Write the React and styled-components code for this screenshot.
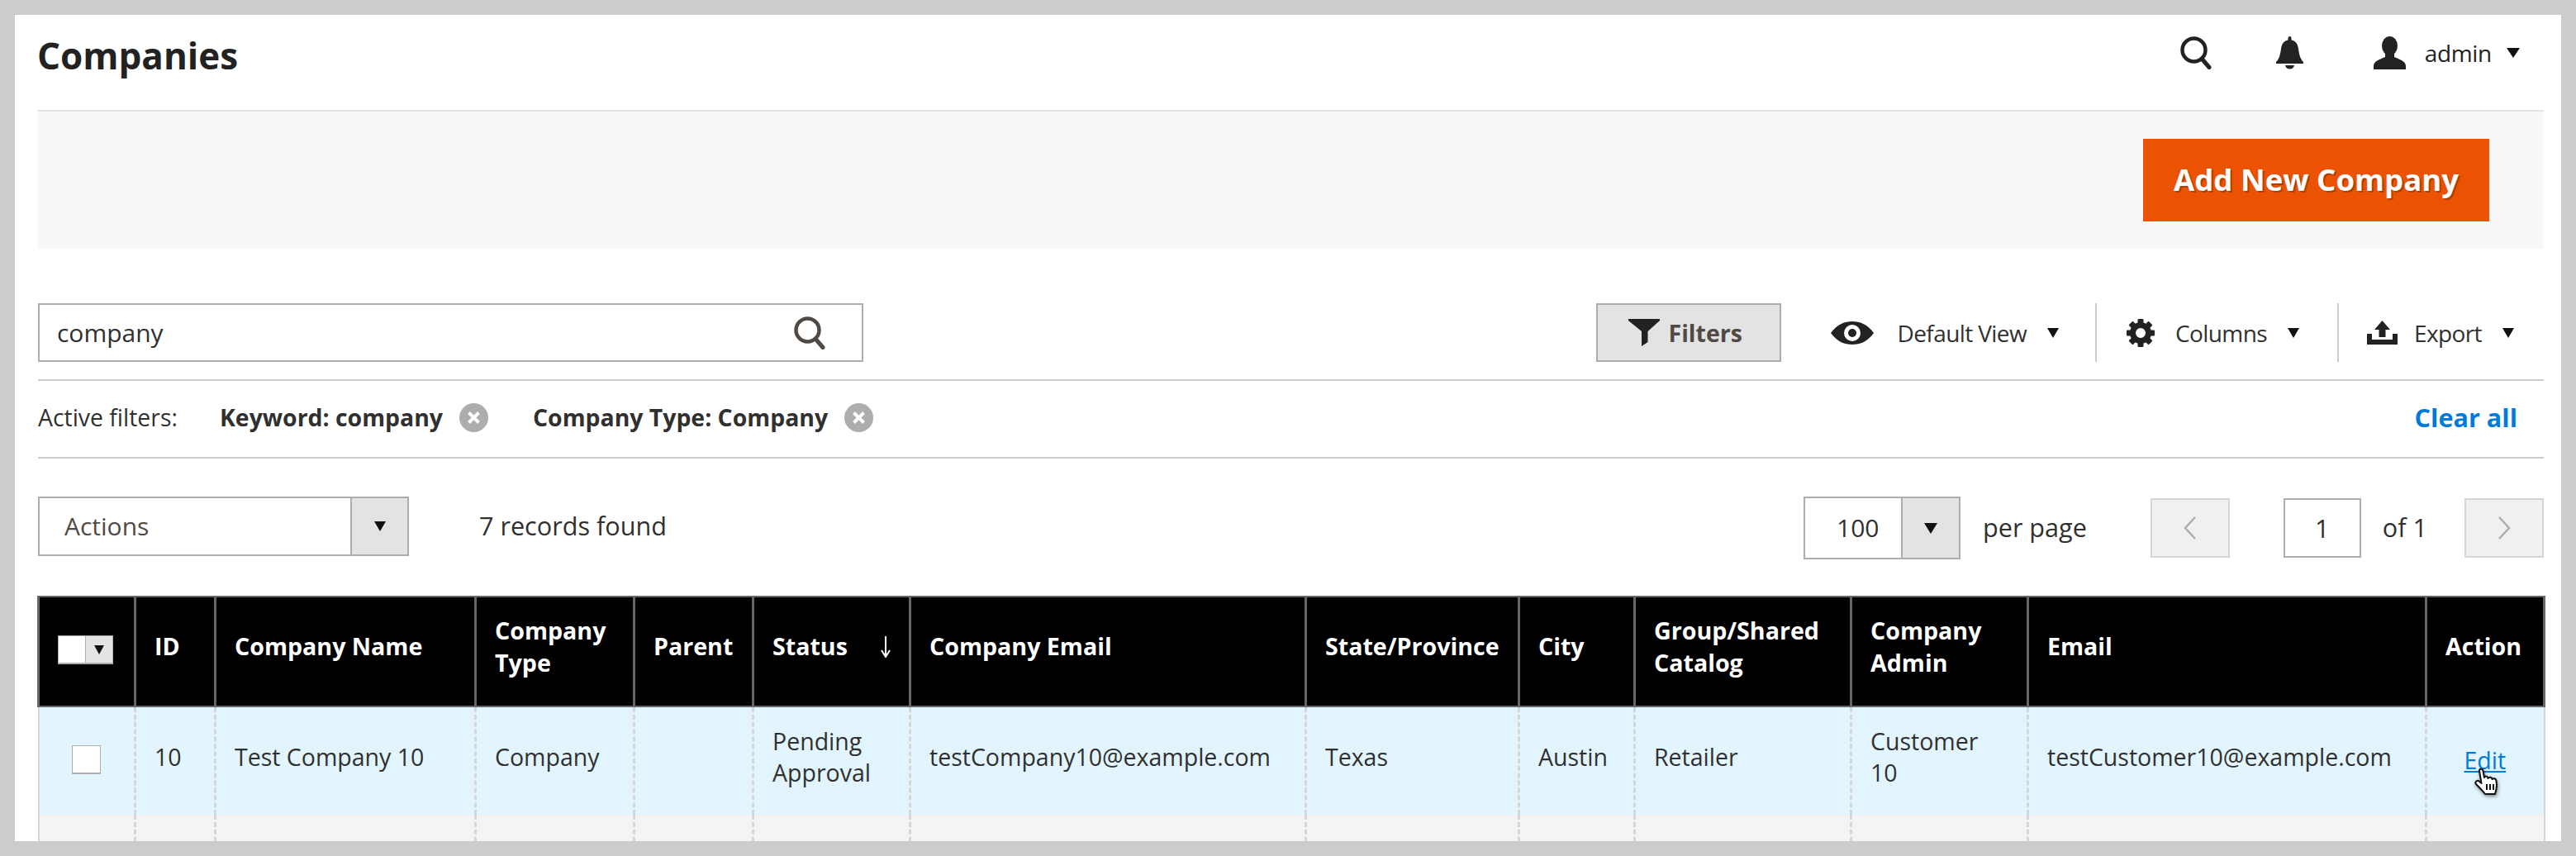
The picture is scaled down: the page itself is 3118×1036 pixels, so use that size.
import React from "react"
import styled, { createGlobalStyle } from "styled-components"

const GlobalStyle = createGlobalStyle`
	* {
		box-sizing: border-box;
	}
	html,
	body {
		margin: 0;
		padding: 0;
		background: #cccccc;
		font-family: "Open Sans", "Noto Sans", sans-serif;
		color: #303030;
	}
`

const Frame = styled.div`
	width: 3118px;
	height: 1036px;
	padding: 18px;
	background: #cccccc;
	overflow: hidden;
`

const Panel = styled.main`
	height: 1000px;
	padding: 0 21px 0 28px;
	background: #ffffff;
	overflow: hidden;
`

const Header = styled.header`
	display: flex;
	align-items: flex-start;
	justify-content: space-between;
	height: 115px;
`

const Title = styled.h1`
	margin: 19px 0 0 -1px;
	font-size: 44px;
	line-height: 60px;
	font-weight: 700;
	color: #222222;
`

const HeaderTools = styled.div`
	display: flex;
	align-items: center;
	height: 44px;
	margin-top: 24px;
	padding-right: 29px;
	color: #222222;
`

const AdminName = styled.span`
	margin: 0 18px 0 22px;
	font-size: 28px;
	line-height: 44px;
	letter-spacing: -0.3px;
`

const ActionBar = styled.div`
	display: flex;
	align-items: flex-start;
	justify-content: flex-end;
	height: 168px;
	padding: 33px 66px 0 0;
	border-top: 2px solid #e3e3e3;
	background: #f8f8f8;
`

const PrimaryButton = styled.button`
	width: 419px;
	height: 100px;
	padding: 0 0 2px;
	border: 0;
	background: #eb5202;
	color: #ffffff;
	font-family: inherit;
	font-size: 36.6px;
	font-weight: 700;
	text-shadow: 2px 2px 0 rgba(0, 0, 0, 0.25);
`

const Toolbar = styled.div`
	display: flex;
	align-items: stretch;
	height: 71px;
	margin-top: 66px;
	padding-right: 36px;
`

const SearchBox = styled.div`
	display: flex;
	align-items: center;
	justify-content: space-between;
	width: 999px;
	padding: 0 44px 0 21px;
	border: 2px solid #adadad;
	font-size: 30px;
	color: #303030;
`

const FiltersButton = styled.button`
	display: flex;
	align-items: center;
	gap: 11px;
	width: 224px;
	margin-left: auto;
	padding: 0 0 0 37px;
	border: 2px solid #adadad;
	background: #e3e3e3;
	color: #514943;
	font-family: inherit;
	font-size: 28.5px;
	font-weight: 700;
`

const ViewItem = styled.div`
	display: flex;
	align-items: center;
	padding: ${(p) => p.$pad};
	border-left: ${(p) => (p.$divided ? "2px solid #cccccc" : "0")};
	font-size: 28px;
	color: #303030;
`

const ViewLabel = styled.span`
	margin: ${(p) => p.$margin};
	letter-spacing: -0.6px;
`

const Caret = styled.span`
	display: inline-block;
	flex: none;
	width: 0;
	height: 0;
	border-style: solid;
	border-width: ${(p) => p.$h || 12}px ${(p) => p.$half || 7}px 0;
	border-color: ${(p) => p.$color || "#111111"} transparent transparent;
`

const FilterRow = styled.div`
	display: flex;
	align-items: center;
	height: 96px;
	margin-top: 21px;
	padding: 0 32px 4px 0;
	border-top: 2px solid #cccccc;
	border-bottom: 2px solid #cccccc;
	font-size: 28.4px;
`

const FilterLabel = styled.span`
	width: 220px;
	color: #303030;
`

const FilterChip = styled.span`
	display: flex;
	align-items: center;
	gap: 20px;
	margin-right: 54px;
	font-weight: 700;
	color: #303030;
`

const ClearDot = styled.svg`
	width: 35px;
	height: 35px;
	flex: none;
`

const ClearAll = styled.a`
	margin-left: auto;
	font-weight: 700;
	font-size: 30.6px;
	color: #007bdb;
`

const PagerRow = styled.div`
	display: flex;
	align-items: center;
	height: 76px;
	margin-top: 46px;
	font-size: 30.6px;
`

const ActionsSelect = styled.div`
	display: flex;
	align-items: stretch;
	align-self: flex-start;
	width: 449px;
	height: 72px;
	border: 2px solid #adadad;
	color: #514943;
	font-size: 30px;
`

const SelectValue = styled.span`
	display: flex;
	align-items: center;
	flex: 1;
	padding: 0 0 2px ${(p) => p.$pad || 30}px;
`

const SelectArrow = styled.span`
	display: flex;
	align-items: center;
	justify-content: center;
	width: ${(p) => p.$width}px;
	border-left: 2px solid #adadad;
	background: #e3e3e3;
`

const Records = styled.span`
	margin: 0 0 7px 85px;
	color: #303030;
`

const PerPageSelect = styled(ActionsSelect)`
	width: 190px;
	height: 76px;
	margin-left: auto;
	color: #303030;
`

const PerPageLabel = styled.span`
	margin: 0 77px 2px 27px;
`

const PageButton = styled.span`
	display: flex;
	align-items: center;
	justify-content: center;
	width: 96px;
	height: 72px;
	border: 2px solid #d6d6d6;
	background: #f0f0f0;
`

const PageInput = styled.span`
	display: flex;
	align-items: center;
	justify-content: center;
	width: 94px;
	height: 72px;
	margin-left: 65px;
	border: 2px solid #adadad;
`

const PageTotal = styled.span`
	margin: 0 45px 2px 26px;
`

const Grid = styled.table`
	table-layout: fixed;
	width: 3033px;
	margin: 44px 0 0 -1px;
	border-collapse: collapse;
	font-size: 28.5px;
`

const HeadCell = styled.th`
	height: 133px;
	padding: 0 10px 12px 22px;
	border: 2px solid #666666;
	border-left-width: 3px;
	border-right-width: 3px;
	background: #000000;
	color: #ffffff;
	font-size: 28.6px;
	line-height: 38.5px;
	font-weight: 700;
	text-align: left;
`

const SortInner = styled.span`
	display: flex;
	align-items: center;
	justify-content: space-between;
`

const Cell = styled.td`
	height: 131px;
	padding: 0 ${(p) => p.$padRight || 12}px ${(p) => p.$padBottom ?? 10}px 22px;
	border-left: 3px dashed #d6d6d6;
	border-right: 3px dashed #d6d6d6;
	background: ${(p) => p.$bg};
	color: #303030;
	line-height: 38.5px;
	&:first-child {
		border-left: 2px solid #d6d6d6;
	}
	&:last-child {
		border-right: 2px solid #d6d6d6;
	}
`

const HeadPicker = styled.span`
	display: flex;
	width: 67px;
	height: 35px;
	margin: 8px 0 0 0;
	border: 1px solid #adadad;
	border-bottom-width: 2px;
	background: #ffffff;
`

const HeadPickerArrow = styled.span`
	display: flex;
	align-items: center;
	justify-content: center;
	width: 33px;
	margin-left: auto;
	border-left: 1px solid #adadad;
	background: #e3e3e3;
`

const RowCheck = styled.span`
	display: block;
	width: 35px;
	height: 35px;
	margin: 6px 0 0 17px;
	border: 1px solid #adadad;
	border-bottom-width: 2px;
	background: #ffffff;
`

const EditWrap = styled.span`
	position: relative;
	display: block;
	text-align: center;
	top: 4px;
	margin-left: -11px;
`

const EditLink = styled.a`
	color: #007bdb;
	text-decoration: underline;
`

const HandCursor = styled.svg`
	position: absolute;
	left: 45px;
	top: 28px;
	width: 34px;
	height: 36px;
	filter: drop-shadow(1px 2px 2px rgba(0, 0, 0, 0.45));
`

const SearchIcon = ({ color, style }) => (
	<svg width="38" height="40" viewBox="0 0 38 40" style={style}>
		<circle cx="16.5" cy="16.5" r="14" fill="none" stroke={color} strokeWidth="4.5" />
		<line x1="26" y1="27" x2="35" y2="37.5" stroke={color} strokeWidth="5" strokeLinecap="round" />
	</svg>
)

const BellIcon = () => (
	<svg width="33" height="41" viewBox="0 0 33 41" fill="#222222">
		<path d="M14.5 2 a2 2 0 0 1 4 0 V4.5 C24 5.5 26 9 27 15 C28 22 29 27 33 31 V33 H0 V31 C4 27 5 22 6 15 C7 9 9 5.5 14.5 4.5 Z" />
		<path d="M11 35 H22 C21 41 12 41 11 35 Z" />
	</svg>
)

const UserIcon = () => (
	<svg width="40" height="40" viewBox="0 0 40 40" fill="#222222">
		<ellipse cx="19.5" cy="11.5" rx="9.5" ry="11.5" />
		<path d="M0 40 V36 C0 30 7 28 14 25 V19 H25 V25 C32 28 39 30 39 36 V40 Z" />
	</svg>
)

const FunnelIcon = () => (
	<svg width="38" height="33" viewBox="0 0 38 33" fill="#222222">
		<path d="M0 0 H38 V2 L23.5 15 V28 L16 33 V15 L0 2 Z" />
	</svg>
)

const EyeIcon = () => (
	<svg width="52" height="28" viewBox="0 0 52 28">
		<path fill="#222222" d="M0 14 C8 3 17 0 26 0 C35 0 44 3 52 14 C44 25 35 28 26 28 C17 28 8 25 0 14 Z" />
		<circle cx="26" cy="14" r="10" fill="#ffffff" />
		<circle cx="26" cy="14" r="5" fill="#222222" />
	</svg>
)

const GearIcon = () => (
	<svg width="34" height="34" viewBox="0 0 34 34">
		{[0, 45, 90, 135, 180, 225, 270, 315].map((deg) => (
			<rect key={deg} x="13.5" y="0" width="7" height="8" rx="1" fill="#222222" transform={`rotate(${deg} 17 17)`} />
		))}
		<circle cx="17" cy="17" r="9.5" fill="none" stroke="#222222" strokeWidth="7" />
	</svg>
)

const ExportIcon = () => (
	<svg width="37" height="29" viewBox="0 0 37 29" fill="#222222">
		<path d="M18.5 0 L28 11 H22.5 V20 H14.5 V11 H9 Z" />
		<path d="M0 16 H6 V23 H31 V16 H37 V29 H0 Z" />
	</svg>
)

const Chevron = ({ flip }) => (
	<svg width="16" height="28" viewBox="0 0 16 28">
		<path
			d={flip ? "M2 1 L14 14 L2 27" : "M14 1 L2 14 L14 27"}
			fill="none"
			stroke="#adadad"
			strokeWidth="2.5"
		/>
	</svg>
)

const ClearIcon = () => (
	<ClearDot viewBox="0 0 35 35">
		<circle cx="17.5" cy="17.5" r="17.5" fill="#adadad" />
		<path d="M11.5 11.5 L23.5 23.5 M23.5 11.5 L11.5 23.5" stroke="#ffffff" strokeWidth="4" />
	</ClearDot>
)

const Hand = () => (
	<HandCursor viewBox="0 0 34 36">
		<path
			d="M7 4 C7 1 11 1 11.5 4 L13 12 C14 10 17 10 17.5 13 C19 11 22 11.5 22.5 14 C24 12.5 27 13 27.5 16 L28 21 C28 26 27 29 26 32 L14 32 C11 28 7 24 3 20 C1 18 4 15 6 16 L9.5 19 Z"
			fill="#ffffff"
			stroke="#111111"
			strokeWidth="2"
			strokeLinejoin="round"
		/>
		<path d="M16 20 V27 M20 20 V27 M24 20 V27" stroke="#111111" strokeWidth="2" />
	</HandCursor>
)

const columns = [117, 97, 315, 192, 144, 190, 479, 258, 140, 262, 214, 482, 143]

const firstRow = "#e2f5fe"
const secondRow = "#f4f4f4"

const App = () => (
	<Frame>
		<GlobalStyle />
		<Panel>
			<Header>
				<Title>Companies</Title>
				<HeaderTools>
					<SearchIcon color="#222222" style={{ marginRight: 78 }} />
					<BellIcon />
					<span style={{ width: 85 }} />
					<UserIcon />
					<AdminName>admin</AdminName>
					<Caret $h={12} $half={8} />
				</HeaderTools>
			</Header>

			<ActionBar>
				<PrimaryButton>Add New Company</PrimaryButton>
			</ActionBar>

			<Toolbar>
				<SearchBox>
					company
					<SearchIcon color="#514943" />
				</SearchBox>
				<FiltersButton>
					<FunnelIcon />
					Filters
				</FiltersButton>
				<ViewItem $pad="0 44px 0 60px">
					<EyeIcon />
					<ViewLabel $margin="0 25px 0 29px">Default View</ViewLabel>
					<Caret />
				</ViewItem>
				<ViewItem $divided $pad="0 46px 0 36px">
					<GearIcon />
					<ViewLabel $margin="0 25px 0 25px">Columns</ViewLabel>
					<Caret />
				</ViewItem>
				<ViewItem $divided $pad="0 0 0 34px">
					<ExportIcon />
					<ViewLabel $margin="0 25px 0 20px">Export</ViewLabel>
					<Caret />
				</ViewItem>
			</Toolbar>

			<FilterRow>
				<FilterLabel>Active filters:</FilterLabel>
				<FilterChip>
					Keyword: company
					<ClearIcon />
				</FilterChip>
				<FilterChip>
					Company Type: Company
					<ClearIcon />
				</FilterChip>
				<ClearAll>Clear all</ClearAll>
			</FilterRow>

			<PagerRow>
				<ActionsSelect>
					<SelectValue>Actions</SelectValue>
					<SelectArrow $width={69}>
						<Caret />
					</SelectArrow>
				</ActionsSelect>
				<Records>7 records found</Records>
				<PerPageSelect>
					<SelectValue $pad={38}>100</SelectValue>
					<SelectArrow $width={70}>
						<Caret $h={13} $half={8} />
					</SelectArrow>
				</PerPageSelect>
				<PerPageLabel>per page</PerPageLabel>
				<PageButton>
					<Chevron />
				</PageButton>
				<PageInput>1</PageInput>
				<PageTotal>of 1</PageTotal>
				<PageButton>
					<Chevron flip />
				</PageButton>
			</PagerRow>

			<Grid>
				<colgroup>
					{columns.map((w, i) => (
						<col key={i} style={{ width: w }} />
					))}
				</colgroup>
				<thead>
					<tr>
						<HeadCell>
							<HeadPicker>
								<HeadPickerArrow>
									<Caret $h={11} $half={6} />
								</HeadPickerArrow>
							</HeadPicker>
						</HeadCell>
						<HeadCell>ID</HeadCell>
						<HeadCell>Company Name</HeadCell>
						<HeadCell>Company Type</HeadCell>
						<HeadCell>Parent</HeadCell>
						<HeadCell>
							<SortInner>
								Status
								<svg width="12" height="26" viewBox="0 0 12 26" style={{ marginRight: 12 }}>
									<path d="M6 0 V24 M1 17 L6 25 L11 17" fill="none" stroke="#ffffff" strokeWidth="2" />
								</svg>
							</SortInner>
						</HeadCell>
						<HeadCell>Company Email</HeadCell>
						<HeadCell>State/Province</HeadCell>
						<HeadCell>City</HeadCell>
						<HeadCell>Group/Shared Catalog</HeadCell>
						<HeadCell>Company Admin</HeadCell>
						<HeadCell>Email</HeadCell>
						<HeadCell>Action</HeadCell>
					</tr>
				</thead>
				<tbody>
					<tr>
						<Cell $bg={firstRow}>
							<RowCheck />
						</Cell>
						<Cell $bg={firstRow}>10</Cell>
						<Cell $bg={firstRow}>Test Company 10</Cell>
						<Cell $bg={firstRow}>Company</Cell>
						<Cell $bg={firstRow} />
						<Cell $bg={firstRow}>Pending Approval</Cell>
						<Cell $bg={firstRow}>testCompany10@example.com</Cell>
						<Cell $bg={firstRow}>Texas</Cell>
						<Cell $bg={firstRow}>Austin</Cell>
						<Cell $bg={firstRow}>Retailer</Cell>
						<Cell $bg={firstRow} $padRight={40}>Customer 10</Cell>
						<Cell $bg={firstRow}>testCustomer10@example.com</Cell>
						<Cell $bg={firstRow}>
							<EditWrap>
								<EditLink>Edit</EditLink>
								<Hand />
							</EditWrap>
						</Cell>
					</tr>
					<tr>
						<Cell $bg={secondRow} />
						<Cell $bg={secondRow} />
						<Cell $bg={secondRow} />
						<Cell $bg={secondRow} />
						<Cell $bg={secondRow} />
						<Cell $bg={secondRow} />
						<Cell $bg={secondRow} />
						<Cell $bg={secondRow} />
						<Cell $bg={secondRow} />
						<Cell $bg={secondRow} />
						<Cell $bg={secondRow} $padRight={70} $padBottom={4}>Customer 9</Cell>
						<Cell $bg={secondRow} />
						<Cell $bg={secondRow} />
					</tr>
				</tbody>
			</Grid>
		</Panel>
	</Frame>
)

export default App
